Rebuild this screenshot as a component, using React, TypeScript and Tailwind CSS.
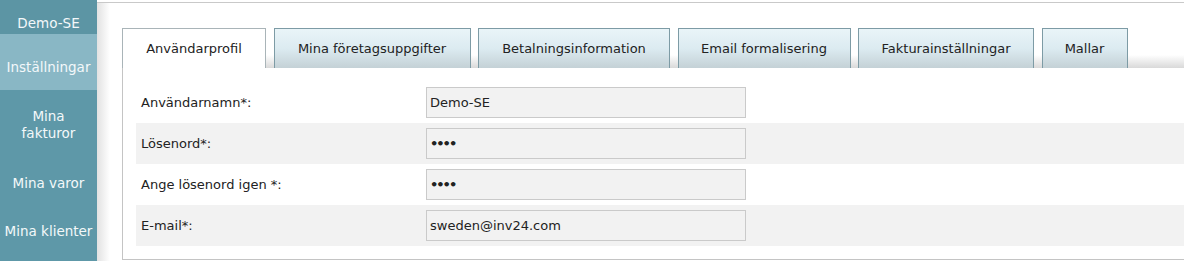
import React from "react";

const tabs = [
  { label: "Användarprofil", w: "w-[144px]", active: true },
  { label: "Mina företagsuppgifter", w: "w-[197px]" },
  { label: "Betalningsinformation", w: "w-[192px]" },
  { label: "Email formalisering", w: "w-[173px]" },
  { label: "Fakturainställningar", w: "w-[176px]" },
  { label: "Mallar", w: "w-[86px]" },
];

const rows = [
  { label: "Användarnamn*:", value: "Demo-SE" },
  { label: "Lösenord*:", value: "••••", secret: true },
  { label: "Ange lösenord igen *:", value: "••••", secret: true },
  { label: "E-mail*:", value: "sweden@inv24.com" },
];

const Sidebar = () => (
  <aside className="w-[97px] shrink-0 bg-[#5e98a8] text-[#f3f8fa] text-[13.5px] leading-[17px] text-center whitespace-nowrap">
    <div className="h-[34px] pt-[15px] bg-[#5c95a4]">Demo-SE</div>
    <div className="h-[56px] pt-[25px] bg-[#89b7c5]">Inställningar</div>
    <div className="pt-[18px] pb-[16px]">
      Mina
      <br />
      fakturor
    </div>
    <div className="pt-[17px] pb-[16px]">Mina varor</div>
    <div className="py-[15px]">Mina klienter</div>
  </aside>
);

const Tabs = () => (
  <div className="relative flex items-end gap-[7.5px] h-[40px]">
    <div className="absolute left-0 right-0 bottom-0 h-[13px] bg-gradient-to-b from-white to-[#d9d9d9]" />
    {tabs.map((t) =>
      t.active ? (
        <div
          key={t.label}
          className={`${t.w} relative z-10 h-[40px] pt-[1px] flex items-center justify-center bg-white border border-b-0 border-[#a9b4b8]`}
        >
          {t.label}
        </div>
      ) : (
        <div
          key={t.label}
          className={`${t.w} relative z-10 h-[40px] pt-[1px] flex items-center justify-center border border-b-0 border-[#7d9ba5] bg-gradient-to-b from-[#e9f4f8] via-[#dcebf1] to-[#c4d1d6]`}
        >
          {t.label}
        </div>
      )
    )}
  </div>
);

export default function App() {
  return (
    <div className="flex h-screen overflow-hidden bg-white font-['DejaVu_Sans',sans-serif] text-[13px] text-[#222]">
      <Sidebar />
      <div className="flex-1 flex flex-col min-w-0">
        <div className="h-[2px]" />
        <div className="flex-1 flex border-t border-[#c9c9c9]">
          <div className="w-[13px] shrink-0 bg-gradient-to-r from-[#e2e2e2] to-white" />
          <div className="flex-1 pl-[12px] pt-[25px] min-w-0">
            <Tabs />
            <div className="border-l border-b border-[#c4c4c4] pl-[13px] pt-[14px] pb-[13px]">
              {rows.map((r, i) => (
                <div
                  key={r.label}
                  className={`h-[41px] flex items-center ${i % 2 === 1 ? "bg-[#f2f2f2]" : "bg-white"}`}
                >
                  <div className="w-[290px] pl-[5px]">{r.label}</div>
                  <div className="w-[320px] h-[31px] flex items-center px-[3px] border border-[#cacaca] bg-[#f2f2f2]">
                    {r.secret ? (
                      <span className="text-[13px] font-bold tracking-[-2px]">{r.value}</span>
                    ) : (
                      r.value
                    )}
                  </div>
                </div>
              ))}
            </div>
          </div>
        </div>
      </div>
    </div>
  );
}
